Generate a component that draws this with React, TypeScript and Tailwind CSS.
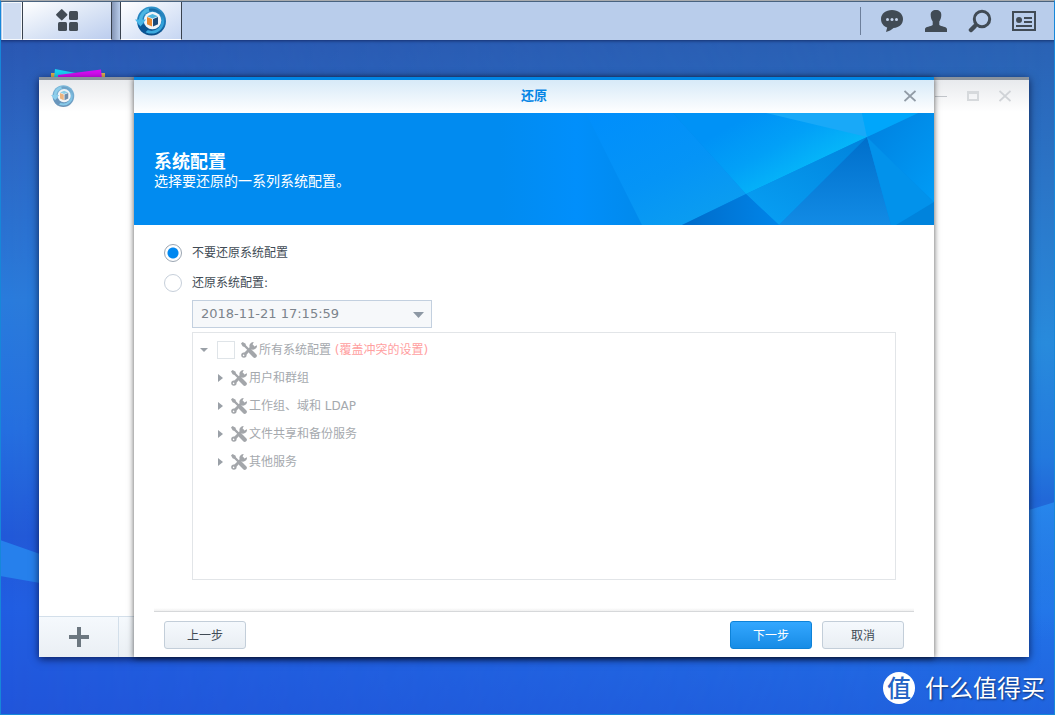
import React from "react";

const CJK = "font-['Noto_Sans','Noto_Sans_CJK_SC',sans-serif]";

function BackupIcon({ className }: { className: string }) {
  return (
    <svg viewBox="0 0 32 32" className={className} aria-hidden="true">
      <defs>
        <linearGradient id="ring" x1="0" y1="0" x2="0" y2="1">
          <stop offset="0" stopColor="#2f93cb" />
          <stop offset="0.600" stopColor="#1c74b2" />
          <stop offset="1" stopColor="#0a4c87" />
        </linearGradient>
        <linearGradient id="ringInner" x1="0" y1="0" x2="0" y2="1">
          <stop offset="0" stopColor="#1a6ca6" />
          <stop offset="0.500" stopColor="#2f9fd8" />
          <stop offset="1" stopColor="#3cabdf" />
        </linearGradient>
      </defs>
      <circle cx="16.500" cy="16" r="14.500" fill="url(#ring)" />
      <circle cx="16.500" cy="16" r="11.300" fill="none" stroke="url(#ringInner)" strokeWidth="2.600" />
      <path d="M5.500 15A11.500 11.500 0 0 1 14 4.800" fill="none" stroke="#4cb6e4" strokeWidth="3.500" />
      <path d="M5 20 10.500 19A9 9 0 0 0 14 24L9 28.500A14.500 14.500 0 0 1 3 20z" fill="#0b5594" />
      <circle cx="17.500" cy="15.500" r="8.800" fill="#f1f6fa" />
      <path d="M0 14.500H11L5.500 21.500z" fill="#49b7e8" />
      <path d="M12 11.200 17.500 9 23 11.200 17.500 13.400z" fill="#4fb6df" />
      <path d="M12 12 17 14V21.500L12 19.300z" fill="#e98a32" />
      <path d="M23 12 18 14V21.500L23 19.300z" fill="#1c4a78" />
    </svg>
  );
}

function ToolsIcon() {
  return (
    <svg viewBox="0 0 16 16" className="h-4 w-4 shrink-0" aria-hidden="true">
      <g stroke="#a3a6aa" fill="none">
        <path d="M2 2 8 8" strokeWidth="2.400" />
        <path d="M10 10 13.700 13.700" strokeWidth="4.200" strokeLinecap="round" />
        <path d="M11.500 4.500 2.800 13.200" strokeWidth="3" strokeLinecap="round" />
      </g>
      <path d="M0 1.600 1.600 0 4.600 1.800 4.800 3.400 3.400 4.800 1.800 4.600z" fill="#a3a6aa" />
      <path d="M16 3.200A4 4 0 0 1 9.600 6.800 4 4 0 0 1 12.700 0L11.600 2.600 13.300 4.400z" fill="#a3a6aa" />
      <circle cx="2.900" cy="13.100" r="2.700" fill="#a3a6aa" />
      <circle cx="2.600" cy="13.400" r="0.800" fill="#fff" />
    </svg>
  );
}

function CrossIcon() {
  return (
    <svg viewBox="0 0 12 12" className="h-3 w-3" aria-hidden="true">
      <path d="M0.500 1 11.500 11M11.500 1 0.500 11" stroke="currentColor" strokeWidth="1.800" />
    </svg>
  );
}

function Wallpaper() {
  return (
    <svg viewBox="0 0 1055 715" preserveAspectRatio="none" className="absolute inset-0 h-full w-full" aria-hidden="true">
      <defs>
        <linearGradient id="skyLeft" x1="0" y1="0" x2="0" y2="1">
          <stop offset="0.060" stopColor="#2a58b3" />
          <stop offset="0.200" stopColor="#2c67c4" />
          <stop offset="0.420" stopColor="#2a7bdc" />
          <stop offset="0.600" stopColor="#256fe0" />
          <stop offset="0.750" stopColor="#2259d8" />
          <stop offset="0.850" stopColor="#215ee2" />
          <stop offset="1" stopColor="#2155da" />
        </linearGradient>
        <linearGradient id="skyRight" x1="0" y1="0" x2="0" y2="1">
          <stop offset="0.060" stopColor="#2a62b4" />
          <stop offset="0.250" stopColor="#2b74c6" />
          <stop offset="0.480" stopColor="#288bdc" />
          <stop offset="0.640" stopColor="#2379de" />
          <stop offset="0.700" stopColor="#2168d8" />
          <stop offset="0.850" stopColor="#2273e8" />
          <stop offset="1" stopColor="#2063de" />
        </linearGradient>
        <linearGradient id="fade" x1="0" y1="0" x2="1" y2="0">
          <stop offset="0" stopColor="#000" />
          <stop offset="1" stopColor="#fff" />
        </linearGradient>
        <mask id="toRight"><rect width="1055" height="715" fill="url(#fade)" /></mask>
        <linearGradient id="waveRight" x1="0" y1="0" x2="0" y2="1">
          <stop offset="0" stopColor="#2786ec" />
          <stop offset="1" stopColor="#2786ec" stopOpacity="0" />
        </linearGradient>
      </defs>
      <rect width="1055" height="715" fill="url(#skyLeft)" />
      <rect width="1055" height="715" fill="url(#skyRight)" mask="url(#toRight)" />
      <path d="M0 540 40 554 300 640 40 583 0 576z" fill="#2680ec" />
      <path d="M1055 502 1029 510 900 556V640H1055z" fill="url(#waveRight)" />
    </svg>
  );
}

function BannerArt() {
  return (
    <svg viewBox="0 0 434 112" preserveAspectRatio="none" className="absolute inset-y-0 right-0 h-full w-[434px]" aria-hidden="true">
      <defs>
        <linearGradient id="g1" x1="0" y1="0" x2="0.350" y2="0">
          <stop offset="0" stopColor="#018bf0" /><stop offset="0.500" stopColor="#018ffb" /><stop offset="1" stopColor="#0189ea" />
        </linearGradient>
        <linearGradient id="g2" x1="0" y1="0" x2="0.700" y2="1">
          <stop offset="0" stopColor="#008efc" /><stop offset="0.600" stopColor="#0594f6" /><stop offset="1" stopColor="#0b9df0" />
        </linearGradient>
        <linearGradient id="g3" gradientUnits="userSpaceOnUse" x1="270" y1="-10" x2="310" y2="60">
          <stop offset="0" stopColor="#0092f6" /><stop offset="0.500" stopColor="#02a0f7" /><stop offset="1" stopColor="#06b8f9" />
        </linearGradient>
        <linearGradient id="g4" x1="1" y1="0" x2="0.300" y2="1">
          <stop offset="0" stopColor="#0083dc" /><stop offset="1" stopColor="#079df2" />
        </linearGradient>
        <linearGradient id="g5" x1="0.600" y1="0" x2="0.600" y2="1">
          <stop offset="0" stopColor="#006fcb" /><stop offset="1" stopColor="#128be5" />
        </linearGradient>
        <linearGradient id="g6" x1="0" y1="0" x2="1" y2="1">
          <stop offset="0" stopColor="#0080df" /><stop offset="1" stopColor="#009cf6" />
        </linearGradient>
        <linearGradient id="g7" x1="0" y1="0" x2="1" y2="0">
          <stop offset="0" stopColor="#006bc9" /><stop offset="1" stopColor="#0085e9" />
        </linearGradient>
      </defs>
      <rect width="434" height="112" fill="url(#g1)" />
      <path d="M86 0H173L246 81 182 112H142z" fill="url(#g2)" />
      <path d="M173 0H434L367 24 246 81z" fill="url(#g3)" />
      <path d="M266 0H362L367 24z" fill="#19a9f8" />
      <path d="M362 0H418L367 24z" fill="#00a6fb" />
      <path d="M367 24 246 81 279 112z" fill="url(#g4)" />
      <path d="M246 81 182 112H279z" fill="url(#g7)" />
      <path d="M367 24 279 112H391z" fill="url(#g5)" />
      <path d="M367 24 391 112H434V89z" fill="#0292eb" />
      <path d="M367 24 418 0H434V89z" fill="url(#g6)" />
      <path d="M434 89 396 112H434z" fill="#0083dc" />
    </svg>
  );
}

const trayButton = "flex h-8 w-11 items-center justify-center text-[#414b55]";

function Taskbar() {
  return (
    <header className="relative flex h-10 shrink-0 border-t-2 border-t-[#49637f] bg-[#b9cdeb] pl-[2px] shadow-[0_1px_3px_rgba(0,0,40,0.5)]">
      <div className="w-5 border border-white/80 bg-[#cfdcf1]" />
      <button aria-label="主菜单" className="flex w-[90px] items-center justify-center border-x border-b border-x-[#39424e] border-b-white bg-linear-to-br from-white via-[#dce6f6] to-[#bccdee]">
        <svg viewBox="0 0 23 23" className="h-[23px] w-[23px]" fill="#434c56" aria-hidden="true">
          <rect x="1.500" y="1.500" width="8.500" height="8.500" rx="1" transform="rotate(45 5.750 5.750)" />
          <rect x="13" y="2" width="9" height="9" rx="1.500" />
          <rect x="2" y="13" width="9" height="9" rx="1.500" />
          <rect x="13" y="13" width="9" height="9" rx="1.500" />
        </svg>
      </button>
      <div className="w-2 bg-linear-to-r from-[#8495b5] to-[#b9cdeb]" />
      <button aria-label="备份" className="flex w-[62px] items-center justify-center border border-t-0 border-x-[#39424e] border-b-white bg-linear-to-br from-white to-[#c6d6f2]">
        <BackupIcon className="h-8 w-8" />
      </button>
      <nav className="ml-auto flex items-center pr-[9px]">
        <span className="mr-[9px] h-7 w-px bg-[#6d7f9b]" />
        <button aria-label="通知" className={trayButton}>
          <svg viewBox="0 0 24 24" className="h-6 w-6" fill="currentColor" aria-hidden="true">
            <path d="M12 1C5.800 1 1 4.800 1 10c0 4.200 2.500 7.300 6.200 8.500L6 23c3-.800 5.500-2 7.500-4C19.500 18.500 23 15 23 10 23 4.800 18.200 1 12 1z" />
            <g fill="#c5d4ec"><circle cx="7.500" cy="10.500" r="1.500" /><circle cx="12" cy="10.500" r="1.500" /><circle cx="16.500" cy="10.500" r="1.500" /></g>
          </svg>
        </button>
        <button aria-label="用户" className={trayButton}>
          <svg viewBox="0 0 24 24" className="h-6 w-6" fill="currentColor" aria-hidden="true">
            <path d="M12 1C8.500 1 6.500 3 6.700 6c0 2.600.700 4.600 2 6.500V16C7 17.600 1.200 17.500 1 20v3h22v-3c-.200-2.500-6-2.400-7.700-4v-3.500c1.300-1.900 2-3.900 2-6.500C17.500 3 15.500 1 12 1z" />
          </svg>
        </button>
        <button aria-label="搜索" className={trayButton}>
          <svg viewBox="0 0 24 24" className="h-6 w-6" fill="none" stroke="currentColor" aria-hidden="true">
            <circle cx="14" cy="10" r="7.700" strokeWidth="3" />
            <path d="M8.500 15.500 6.500 17.500" strokeWidth="3" />
            <path d="M6.500 17.500 3 21" strokeWidth="4.500" strokeLinecap="round" />
          </svg>
        </button>
        <button aria-label="小组件" className={trayButton}>
          <svg viewBox="0 0 24 20" className="h-5 w-6" fill="none" stroke="currentColor" aria-hidden="true">
            <rect x="1" y="1" width="22" height="18" strokeWidth="2" />
            <circle cx="7" cy="9" r="3" fill="currentColor" stroke="none" />
            <path d="M12 7H20M12 11H20M4 15H20" strokeWidth="2" />
          </svg>
        </button>
      </nav>
    </header>
  );
}

function BackWindow() {
  return (
    <section aria-label="备份" className="relative col-start-1 row-start-1 flex flex-col border-t-[3px] border-t-[#8a939e] bg-white shadow-[0_2px_8px_rgba(0,0,30,0.7)]">
      <div className="flex h-8 items-center justify-between bg-linear-to-b from-[#e8eaed] to-white pr-[18px] pl-3">
        <BackupIcon className="h-6 w-6 opacity-60" />
        <div className="flex items-center gap-5 text-[#d0d3d7]">
          <button aria-label="最小化" className="flex h-3 w-3 items-center"><span className="h-px w-3 bg-[#c0c4c9]" /></button>
          <button aria-label="最大化" className="h-[10px] w-3 border-2 border-t-[3px] border-[#d6d9dc]" />
          <button aria-label="关闭窗口" className="h-3 w-3"><CrossIcon /></button>
        </div>
      </div>
      <div className="flex-1" />
      <div className="flex h-[41px] border-t border-t-[#d3dfea] bg-linear-to-b from-[#f5f9fd] to-[#eaeff4] mr-[95px]">
        <button aria-label="添加" className="flex w-20 items-center justify-center border-r border-r-[#d3dfea]">
          <svg viewBox="0 0 20 20" className="h-5 w-5" aria-hidden="true"><path d="M10 0V20M0 10H20" stroke="#6c7780" strokeWidth="4" /></svg>
        </button>
      </div>
    </section>
  );
}

const radio =
  "h-[18px] w-[18px] shrink-0 appearance-none rounded-full border border-[#c6cfda] bg-white checked:border-[#9aa5b2] checked:bg-[radial-gradient(circle,#0088f0_5px,white_6px)]";
const plainButton =
  "h-7 w-[82px] rounded-[3px] border border-[#c3ced9] bg-linear-to-b from-[#f5f9fd] to-[#e9eef3] pt-px text-xs text-[#414b55]";

const branches = ["用户和群组", "工作组、域和 LDAP", "文件共享和备份服务", "其他服务"];

function RestoreDialog() {
  return (
    <section role="dialog" aria-label="还原" className="relative col-start-1 row-start-1 flex w-[800px] max-w-full flex-col justify-self-center border-t-[3px] border-t-[#0185e3] bg-white shadow-[0_1px_6px_rgba(0,0,0,0.65)]">
      <div className="grid h-[33px] grid-cols-[1fr_auto_1fr] items-center bg-linear-to-b from-[#d7eaf8] to-white px-[18px] pb-px">
        <h1 className="col-start-2 text-[13px] font-bold text-[#0585e5]">还原</h1>
        <button aria-label="关闭" className="h-3 w-3 justify-self-end text-[#919ba6]"><CrossIcon /></button>
      </div>
      <div className="relative h-28 bg-[#018bf0] px-5 pt-9 text-white">
        <BannerArt />
        <h2 className="relative text-lg leading-6 font-bold">系统配置</h2>
        <p className="relative text-sm leading-4">选择要还原的一系列系统配置。</p>
      </div>
      <form className="flex flex-1 flex-col px-5 pt-[18px] pb-2 font-['DejaVu_Sans','Noto_Sans_CJK_SC',sans-serif] text-xs text-[#414b55]" onSubmit={(e) => e.preventDefault()}>
        <div className="flex flex-1 flex-col px-[10px]">
          <label className="flex h-5 items-center gap-[10px]">
            <input type="radio" name="mode" defaultChecked className={radio} />不要还原系统配置
          </label>
          <label className="mt-[10px] flex h-5 items-center gap-[10px]">
            <input type="radio" name="mode" className={radio} />还原系统配置:
          </label>
          <div className="relative mt-[7px] ml-7 w-60">
            <select aria-label="配置版本" className="h-7 w-full appearance-none border border-[#c3d0df] bg-[#f6f8fa] pr-6 pl-2 text-[13px] text-[#7c848c]">
              <option>2018-11-21 17:15:59</option>
            </select>
            <svg viewBox="0 0 11 6" className="pointer-events-none absolute top-3 right-2 h-[6px] w-[11px]" aria-hidden="true"><path d="M0 0H11L5.500 6z" fill="#8d98a4" /></svg>
          </div>
          <div className="mt-1 mr-2 ml-7 h-[248px] border border-[#e2e5e8] py-[3px] pl-[7px] text-[#a5a9ae]">
            <label className="flex h-7 items-center">
              <svg viewBox="0 0 8 4" className="h-1 w-2" aria-hidden="true"><path d="M0 0H8L4 4z" fill="#9aa0a7" /></svg>
              <input type="checkbox" disabled className="mr-[6px] ml-[9px] h-[18px] w-[18px] appearance-none border border-[#dfe4e8] bg-white" />
              <ToolsIcon />
              <span className="ml-[2px]">所有系统配置 <span className="text-[#ffa09f]">(覆盖冲突的设置)</span></span>
            </label>
            <ul>
              {branches.map((name) => (
                <li key={name} className="flex h-7 items-center pl-[18px]">
                  <svg viewBox="0 0 5 8" className="mr-2 h-2 w-[5px]" aria-hidden="true"><path d="M0 0V8L5 4z" fill="#9aa0a7" /></svg>
                  <ToolsIcon />
                  <span className="ml-[2px]">{name}</span>
                </li>
              ))}
            </ul>
          </div>
        </div>
        <div className="mt-7 h-1 border-b border-b-[#d6d8da] bg-linear-to-b from-white to-[#f0f0f0]" />
        <div className="mt-[9px] flex gap-[10px] px-[10px]">
          <button type="button" className={plainButton}>上一步</button>
          <button type="submit" className="ml-auto h-7 w-[82px] rounded-[3px] border border-[#0e82d8] bg-linear-to-b from-[#33a7ff] to-[#168ce6] pt-px text-xs text-white">下一步</button>
          <button type="button" className={plainButton}>取消</button>
        </div>
      </form>
    </section>
  );
}

export default function App() {
  return (
    <div className={`relative flex min-h-screen flex-col overflow-hidden bg-[#2366d9] ${CJK}`}>
      <Wallpaper />
      <Taskbar />
      <main className="relative grid pt-[37px] pr-[26px] pl-[39px]">
        <svg viewBox="0 0 54 20" className="absolute top-7 left-[51px] h-5 w-[54px]" aria-hidden="true">
          <path d="M0 5H4V20H0zM50 5H54V20H50z" fill="#e0b04a" />
          <path d="M4 1 30 6V20H2z" fill="#19d2f5" />
          <path d="M7 7 50 1.500 52 20H7z" fill="#d80df5" />
        </svg>
        <BackWindow />
        <RestoreDialog />
      </main>
      <footer className="relative flex items-center justify-end gap-[10px] pt-[15px] pr-[10px] text-white">
        <span className="flex h-8 w-8 items-center justify-center rounded-full bg-white text-2xl leading-8 font-medium text-[#2463c4]">值</span>
        <span className="text-2xl leading-8 [text-shadow:1px_1px_2px_rgba(0,0,0,0.5)]">什么值得买</span>
      </footer>
      <div className="pointer-events-none absolute inset-0 border border-[#1687d9] border-t-[#a9abad]" />
    </div>
  );
}
